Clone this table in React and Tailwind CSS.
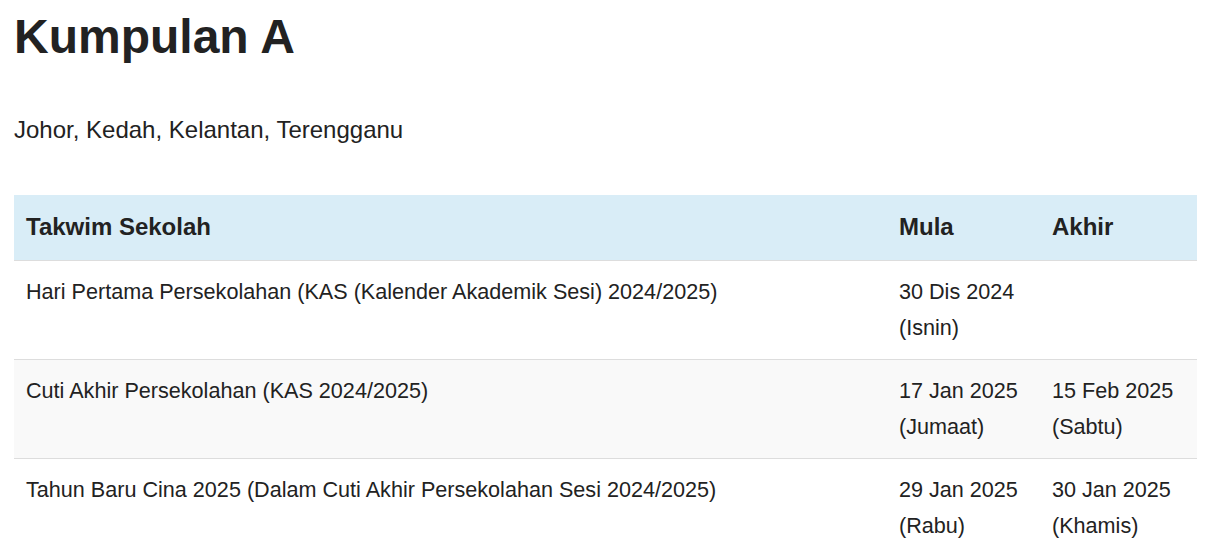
import React from 'react';

const rows = [
    { name: 'Hari Pertama Persekolahan (KAS (Kalender Akademik Sesi) 2024/2025)', start: ['30 Dis 2024', '(Isnin)'], end: null },
    { name: 'Cuti Akhir Persekolahan (KAS 2024/2025)', start: ['17 Jan 2025', '(Jumaat)'], end: ['15 Feb 2025', '(Sabtu)'] },
    { name: 'Tahun Baru Cina 2025 (Dalam Cuti Akhir Persekolahan Sesi 2024/2025)', start: ['29 Jan 2025', '(Rabu)'], end: ['30 Jan 2025', '(Khamis)'] },
];

export default function App() {
    return (
        <div className="min-h-[552px] bg-white pl-[14px] pr-[15px] text-[#222] font-['Liberation_Sans',Arial,sans-serif]">
            {/* Title */}
            <h1 className="pt-[11px] text-[48px] font-bold leading-[1.1]">Kumpulan A</h1>
            <p className="mt-[49px] text-[24px] leading-[34px]">Johor, Kedah, Kelantan, Terengganu</p>

            {/* Calendar table */}
            <table className="mt-[48px] w-full table-fixed border-collapse text-left">
                <colgroup>
                    <col className="w-[873px]" />
                    <col className="w-[153px]" />
                    <col />
                </colgroup>
                <thead>
                    <tr className="bg-[#d9edf7] border-b border-[#ddd]">
                        <th className="px-3 pt-[14px] pb-[15px] text-[24px] leading-[36px] font-bold">Takwim Sekolah</th>
                        <th className="px-3 pt-[14px] pb-[15px] text-[24px] leading-[36px] font-bold">Mula</th>
                        <th className="px-3 pt-[14px] pb-[15px] text-[24px] leading-[36px] font-bold">Akhir</th>
                    </tr>
                </thead>
                <tbody>
                    {rows.map((row, i) => (
                        <tr key={i} className={`border-b border-[#ddd] ${i % 2 === 1 ? 'bg-[#f9f9f9]' : 'bg-white'}`}>
                            <td className="px-3 py-[13px] align-top text-[21.6px] leading-[36px]">{row.name}</td>
                            <td className="px-3 py-[13px] align-top text-[21.6px] leading-[36px]">
                                <div>{row.start[0]}</div>
                                <div>{row.start[1]}</div>
                            </td>
                            <td className="px-3 py-[13px] align-top text-[21.6px] leading-[36px]">
                                {row.end && (
                                    <>
                                        <div>{row.end[0]}</div>
                                        <div>{row.end[1]}</div>
                                    </>
                                )}
                            </td>
                        </tr>
                    ))}
                </tbody>
            </table>
        </div>
    );
}
